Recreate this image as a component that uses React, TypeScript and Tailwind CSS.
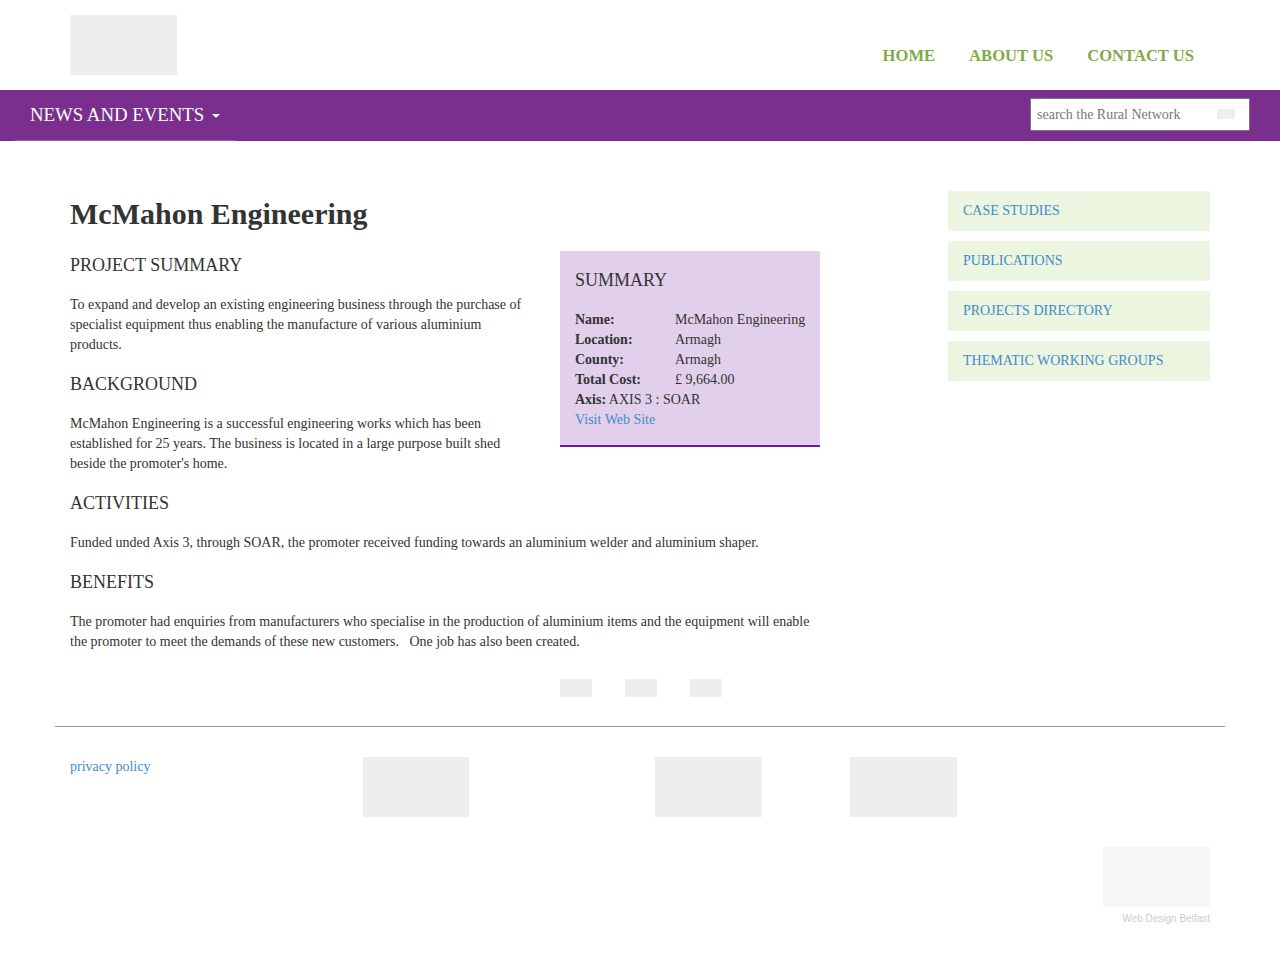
import { ReactNode } from 'react';

const serif = "font-['Liberation_Serif','Times_New_Roman',serif]";

function Section({ title, children }: { title: string; children: ReactNode }) {
  return (
    <div>
      <h3 className="text-[18px] leading-[20px] text-[#333] mb-[20px]">{title}</h3>
      <p className="text-[14px] leading-[20px] text-[#333] mb-[19px]">{children}</p>
    </div>
  );
}

function SummaryRow({ label, value }: { label: string; value: string }) {
  return (
    <div className="flex whitespace-nowrap">
      <span className="w-[100px] shrink-0 font-bold">{label}</span>
      <span>{value}</span>
    </div>
  );
}

const sideLinks = ['CASE STUDIES', 'PUBLICATIONS', 'PROJECTS DIRECTORY', 'THEMATIC WORKING GROUPS'];

export default function App() {
  return (
    <div className={`${serif} bg-white min-h-[956px] text-[#333]`}>
      {/* top header */}
      <header className="h-[90px] w-[1170px] mx-auto px-[15px] flex items-start justify-between">
        <div className="mt-[15px] w-[107px] h-[60px] bg-[#eeeeee]" />
        <nav className="flex mt-[46px] mr-[-1px]">
          {['HOME', 'ABOUT US', 'CONTACT US'].map((l) => (
            <a key={l} className="px-[17px] text-[16.6px] leading-[20px] font-bold text-[#7fab47]">
              {l}
            </a>
          ))}
        </nav>
      </header>

      {/* purple bar */}
      <div className="h-[51px] bg-[#7a2f8e] flex items-start justify-between">
        <div className="ml-[15px] w-[220px] shrink-0 h-[51px] px-[15px] border-b border-[#9a5fab] flex items-center whitespace-nowrap text-white text-[18.8px] leading-[20px]">
          <span className="mt-[-1px]">NEWS AND EVENTS</span>
          <span className="ml-[8px] mt-[1px] w-0 h-0 border-x-[4px] border-x-transparent border-t-[4px] border-t-white" />
        </div>
        <div className="mt-[8px] mr-[30px] w-[220px] h-[33px] bg-white border border-[#777] flex items-center justify-between pl-[6px] pr-[14px]">
          <span className="text-[14px] text-[#777]">search the Rural Network</span>
          <span className="w-[18px] h-[10px] bg-[#eeeeee] mb-[2px]" />
        </div>
      </div>

      {/* main */}
      <main className="w-[1170px] mx-auto px-[15px] pt-[50px] flex justify-between">
        <div className="w-[750px]">
          <h1 className="text-[30px] leading-[33px] font-bold text-[#333] mt-[6px] mb-[25px]">McMahon Engineering</h1>
          <div className="flex justify-between">
            <div className="w-[460px]">
              <Section title="PROJECT SUMMARY">
                To expand and develop an existing engineering business through the purchase of specialist equipment thus
                enabling the manufacture of various aluminium products.
              </Section>
              <Section title="BACKGROUND">
                McMahon Engineering is a successful engineering works which has been established for 25 years. The business is
                located in a large purpose built shed beside the promoter's home.
              </Section>
            </div>
            <div className="w-[260px] h-[196px] mt-[-4px] bg-[#e1cfec] border-b-2 border-[#6e1b9a] px-[15px] pt-[19px] text-[14px] leading-[20px]">
              <h3 className="text-[18px] leading-[20px] mb-[20px]">SUMMARY</h3>
              <SummaryRow label="Name:" value="McMahon Engineering" />
              <SummaryRow label="Location:" value="Armagh" />
              <SummaryRow label="County:" value="Armagh" />
              <SummaryRow label="Total Cost:" value="£ 9,664.00" />
              <div>
                <span className="font-bold">Axis:</span> AXIS 3 : SOAR
              </div>
              <a className="text-[#428bca]">Visit Web Site</a>
            </div>
          </div>
          <Section title="ACTIVITIES">
            Funded unded Axis 3, through SOAR, the promoter received funding towards an aluminium welder and aluminium shaper.
          </Section>
          <Section title="BENEFITS">
            The promoter had enquiries from manufacturers who specialise in the production of aluminium items and the equipment
            will enable the promoter to meet the demands of these new customers.&nbsp;&nbsp; One job has also been created.
          </Section>
        </div>

        <aside className="w-[262px] flex flex-col gap-[10px]">
          {sideLinks.map((l) => (
            <a key={l} className="h-[40px] bg-[#ebf5df] pl-[15px] pb-[2px] flex items-center text-[14px] text-[#428bca]">
              {l}
            </a>
          ))}
        </aside>
      </main>

      {/* share icons */}
      <div className="flex justify-center gap-[33px] mt-[8px] pl-[2px]">
        <span className="w-[32px] h-[18px] bg-[#eeeeee]" />
        <span className="w-[32px] h-[18px] bg-[#eeeeee]" />
        <span className="w-[32px] h-[18px] bg-[#eeeeee]" />
      </div>

      {/* footer */}
      <footer className="w-[1170px] mx-auto mt-[29px]">
        <hr className="border-t border-[#999]" />
        <div className="px-[15px] pt-[30px] flex items-start">
          <a className="w-[293px] text-[14px] leading-[20px] text-[#428bca]">privacy policy</a>
          <div className="w-[106px] h-[60px] bg-[#eeeeee]" />
          <div className="ml-[186px] w-[107px] h-[60px] bg-[#eeeeee]" />
          <div className="ml-[88px] w-[107px] h-[60px] bg-[#eeeeee]" />
        </div>
        <div className="px-[15px] mt-[30px] flex flex-col items-end">
          <div className="w-[107px] h-[60px] bg-[#f7f7f7]" />
          <span className="mt-[6px] text-[10px] leading-[12px] text-[#cccccc] font-['Liberation_Sans',Arial,sans-serif]">
            Web Design Belfast
          </span>
        </div>
      </footer>
    </div>
  );
}
